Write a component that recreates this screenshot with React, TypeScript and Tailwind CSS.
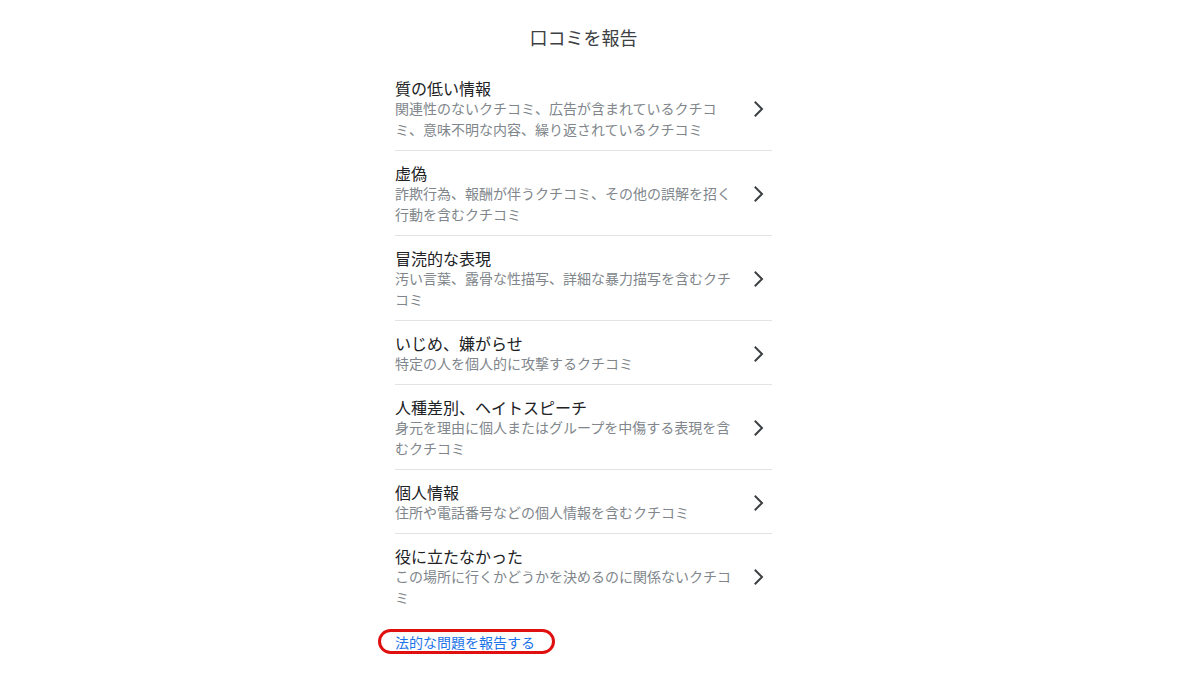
import React from "react";

const items = [
  { t: "質の低い情報", d: "関連性のないクチコミ、広告が含まれているクチコミ、意味不明な内容、繰り返されているクチコミ" },
  { t: "虚偽", d: "詐欺行為、報酬が伴うクチコミ、その他の誤解を招く行動を含むクチコミ" },
  { t: "冒涜的な表現", d: "汚い言葉、露骨な性描写、詳細な暴力描写を含むクチコミ" },
  { t: "いじめ、嫌がらせ", d: "特定の人を個人的に攻撃するクチコミ" },
  { t: "人種差別、ヘイトスピーチ", d: "身元を理由に個人またはグループを中傷する表現を含むクチコミ" },
  { t: "個人情報", d: "住所や電話番号などの個人情報を含むクチコミ" },
  { t: "役に立たなかった", d: "この場所に行くかどうかを決めるのに関係ないクチコミ" },
];

function Chevron() {
  return (
    <svg width="10" height="16" viewBox="0 0 10 16" fill="none">
      <polyline points="1.5,1.5 8,8 1.5,14.5" stroke="#3c4043" strokeWidth="2" strokeLinecap="square" strokeLinejoin="miter" />
    </svg>
  );
}

export default function App() {
  return (
    <div
      className="w-[1200px] h-[675px] bg-white overflow-hidden"
      style={{ fontFamily: '"Noto Sans CJK JP", "Noto Sans", sans-serif' }}
    >
      <div className="ml-[395px] w-[377px] pt-[25px]">
        <h1 className="text-center text-[18px] leading-[24px] text-[#3c4043] font-normal">口コミを報告</h1>
        <div className="mt-[17px]">
          {items.map((it, i) => (
            <div
              key={i}
              className={`flex items-center pt-[12px] pb-[10px] ${i < items.length - 1 ? "border-b border-[#e3e3e3]" : ""}`}
            >
              <div className="w-[344px]">
                <div className="text-[16px] leading-[20px] text-[#202124]">{it.t}</div>
                <div className="text-[14px] leading-[21px] text-[#80868b]">{it.d}</div>
              </div>
              <div className="flex-1 flex justify-end pr-[8px]">
                <Chevron />
              </div>
            </div>
          ))}
        </div>
        <div className="mt-[11px]">
          <span className="relative inline-block text-[14px] leading-[20px] text-[#1a73e8]">
            法的な問題を報告する
            <span className="absolute left-[-17px] right-[-20px] top-[-3px] bottom-[-2px] rounded-full border-[3px] border-[#e01010]" />
          </span>
        </div>
      </div>
    </div>
  );
}
